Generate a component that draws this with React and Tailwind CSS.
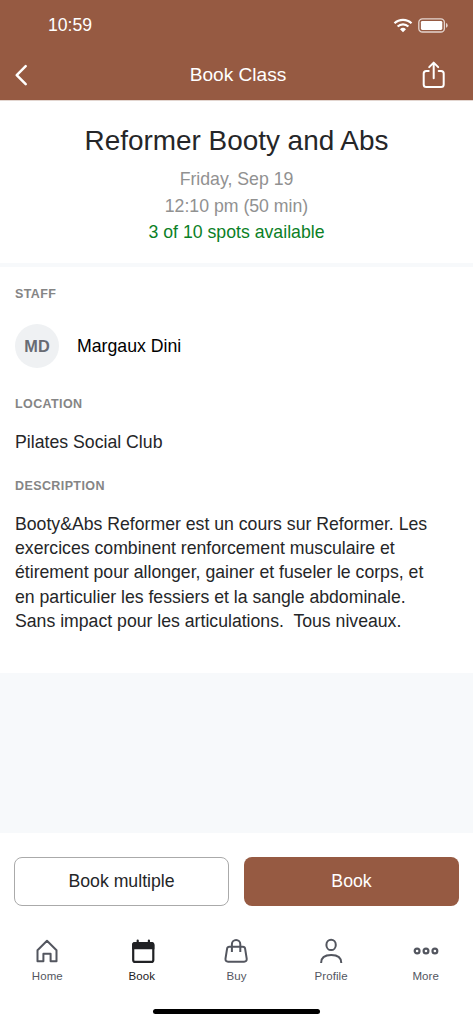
const tabs = [
  { label: "Home", icon: HomeIcon },
  { label: "Book", icon: CalendarIcon, active: true },
  { label: "Buy", icon: BagIcon },
  { label: "Profile", icon: ProfileIcon },
  { label: "More", icon: MoreIcon },
];

const description = [
  "Booty&Abs Reformer est un cours sur Reformer. Les",
  "exercices combinent renforcement musculaire et",
  "étirement pour allonger, gainer et fuseler le corps, et",
  "en particulier les fessiers et la sangle abdominale.",
  "Sans impact pour les articulations.\u00a0 Tous niveaux.",
];

function HomeIcon() {
  return (
    <svg width="28" height="28" viewBox="0 0 28 28" fill="none" stroke="currentColor" strokeWidth="2" strokeLinejoin="round">
      <path d="M4.500 13.200 14 3.800l9.500 9.400v11.100h-5.900v-7.600h-7.200v7.600H4.500z" />
    </svg>
  );
}

function CalendarIcon() {
  return (
    <svg width="28" height="28" viewBox="0 0 28 28" fill="none" stroke="currentColor" strokeWidth="2.200">
      <rect x="5.200" y="6" width="20.100" height="18.900" rx="2" />
      <path d="M5.200 11.200V8q0-2 2-2h16.100q2 0 2 2v3.200z" fill="currentColor" />
      <path d="M9.700 3.600v3M20.900 3.600v3" strokeLinecap="round" />
    </svg>
  );
}

function BagIcon() {
  return (
    <svg width="28" height="28" viewBox="0 0 28 28" fill="none" stroke="currentColor" strokeWidth="2" strokeLinejoin="round">
      <path d="M7.300 9.800h13.600q1.900 0 2.200 1.900l1.600 10q.3 3-2.600 3H6.100q-2.900 0-2.600-3l1.600-10q.3-1.900 2.200-1.900z" />
      <path d="M9.900 15V7.200a4.200 4.200 0 0 1 8.400 0V15" />
    </svg>
  );
}

function ProfileIcon() {
  return (
    <svg width="28" height="28" viewBox="0 0 28 28" fill="none" stroke="currentColor" strokeWidth="2">
      <ellipse cx="14.100" cy="7.900" rx="4.700" ry="5.200" />
      <path d="M4.100 26c0-5 3.800-7.900 10.100-7.900S24.300 21 24.300 26" />
    </svg>
  );
}

function MoreIcon() {
  return (
    <svg width="28" height="28" viewBox="0 0 28 28" fill="none" stroke="currentColor" strokeWidth="2.200">
      <circle cx="5.100" cy="14" r="2.400" />
      <circle cx="14" cy="14" r="2.400" />
      <circle cx="22.900" cy="14" r="2.400" />
    </svg>
  );
}

function StatusBar() {
  return (
    <div className="flex h-[50px] items-center justify-between pl-12 pr-[25px] text-[17.6px] leading-none">
      <span className="pt-px">10:59</span>
      <div className="flex items-center gap-[5px] pt-px">
        <svg width="20" height="15" viewBox="0 0 20 15" fill="none" stroke="currentColor" strokeWidth="2.200">
          <path d="M1.500 5.300a12.200 12.200 0 0 1 17 0" />
          <path d="M4.600 8.500a7.700 7.700 0 0 1 10.800 0" />
          <path d="M10 14.200 7 11.200a4.300 4.300 0 0 1 6 0z" fill="currentColor" stroke="none" />
        </svg>
        <svg width="30" height="15" viewBox="0 0 30 15" fill="none">
          <rect x=".8" y=".8" width="25.600" height="13.200" rx="3.600" stroke="currentColor" strokeOpacity=".75" strokeWidth="1.300" />
          <rect x="2.900" y="2.900" width="21.400" height="9" rx="1.400" fill="currentColor" />
          <path d="M28 5v4.800q1.700-.5 1.700-2.400T28 5z" fill="currentColor" fillOpacity=".75" />
        </svg>
      </div>
    </div>
  );
}

function SectionLabel({ children }) {
  return (
    <h2 className="text-[12.5px] font-bold uppercase leading-4 tracking-[0.4px] text-[#858585]">
      {children}
    </h2>
  );
}

export default function App() {
  return (
    <div className="flex h-[1024px] w-full flex-col bg-white font-['Liberation_Sans',Arial,sans-serif] text-[#252628]">
      <header className="h-[100px] bg-[#965a42] text-white">
        <StatusBar />
        <div className="grid h-[50px] grid-cols-[1fr_auto_1fr] items-center pl-[14px] pr-[26px]">
          <button aria-label="Back">
            <svg width="15" height="22" viewBox="0 0 15 22" fill="none" stroke="currentColor" strokeWidth="2.500" strokeLinecap="round" strokeLinejoin="round">
              <path d="M11.700 2.200 2.700 11.200l9 9" />
            </svg>
          </button>
          <h1 className="pl-[15px] text-[19.1px] leading-none">Book Class</h1>
          <button aria-label="Share" className="justify-self-end">
            <svg width="26" height="28" viewBox="0 0 26 28" fill="none" stroke="currentColor" strokeWidth="2" strokeLinecap="round" strokeLinejoin="round">
              <path d="M7.700 9.900H5.300q-2.600 0-2.600 2.600v11q0 2.600 2.600 2.600h14.800q2.600 0 2.600-2.600v-11q0-2.600-2.600-2.600h-2.400" />
              <path d="M12.700 17.300V1.900M8.200 6.100l4.500-4.500 4.500 4.500" />
            </svg>
          </button>
        </div>
      </header>

      <section className="flex h-[163px] flex-col items-center border-t border-[#e3d6d0] pt-[22px]">
        <h2 className="text-[27.9px] leading-9">Reformer Booty and Abs</h2>
        <div className="mt-[7px] text-center text-[17.7px] leading-[26.5px] text-[#919191]">
          <p>Friday, Sep 19</p>
          <p>12:10 pm (50 min)</p>
          <p className="text-[#0b7f26]">3 of 10 spots available</p>
        </div>
      </section>
      <div className="h-1 bg-[#f7f9fb]" />

      <section className="h-[406px] px-[15px] pt-[19px]">
        <SectionLabel>Staff</SectionLabel>
        <div className="mt-[22px] flex items-center gap-[18px]">
          <div className="flex size-[44px] items-center justify-center rounded-full bg-[#eff1f3] text-[16.3px] font-bold text-[#686b73]">
            MD
          </div>
          <span className="text-[17.7px] leading-6 text-black">Margaux Dini</span>
        </div>
        <div className="mt-[28px]">
          <SectionLabel>Location</SectionLabel>
          <p className="mt-[18px] text-[17.7px] leading-6">Pilates Social Club</p>
        </div>
        <div className="mt-[24px]">
          <SectionLabel>Description</SectionLabel>
          <p className="mt-[17.5px] text-[17.67px] leading-[24.4px]">
            {description.map((line) => (
              <span key={line} className="block whitespace-nowrap">
                {line}
              </span>
            ))}
          </p>
        </div>
      </section>

      <div className="flex-1 bg-[#f7f9fb]" />

      <footer className="h-[191px] bg-white pt-[24px]">
        <div className="grid grid-cols-2 gap-[15px] px-[14px] text-[17.7px]">
          <button className="h-[49px] rounded-lg border border-[#aaaaaa]">Book multiple</button>
          <button className="h-[49px] rounded-lg bg-[#965a42] text-white">Book</button>
        </div>
        <nav className="mt-[31px] grid grid-cols-5">
          {tabs.map(({ label, icon: Icon, active }) => (
            <button
              key={label}
              className={`flex flex-col items-center text-[11.5px] leading-4 tracking-[0.1px] ${
                active ? "text-[#202124]" : "text-[#53565f]"
              }`}
            >
              <Icon />
              <span className="mt-[3px]">{label}</span>
            </button>
          ))}
        </nav>
        <div className="mx-auto mt-[25px] h-[5px] w-[167px] rounded-full bg-black" />
      </footer>
    </div>
  );
}
